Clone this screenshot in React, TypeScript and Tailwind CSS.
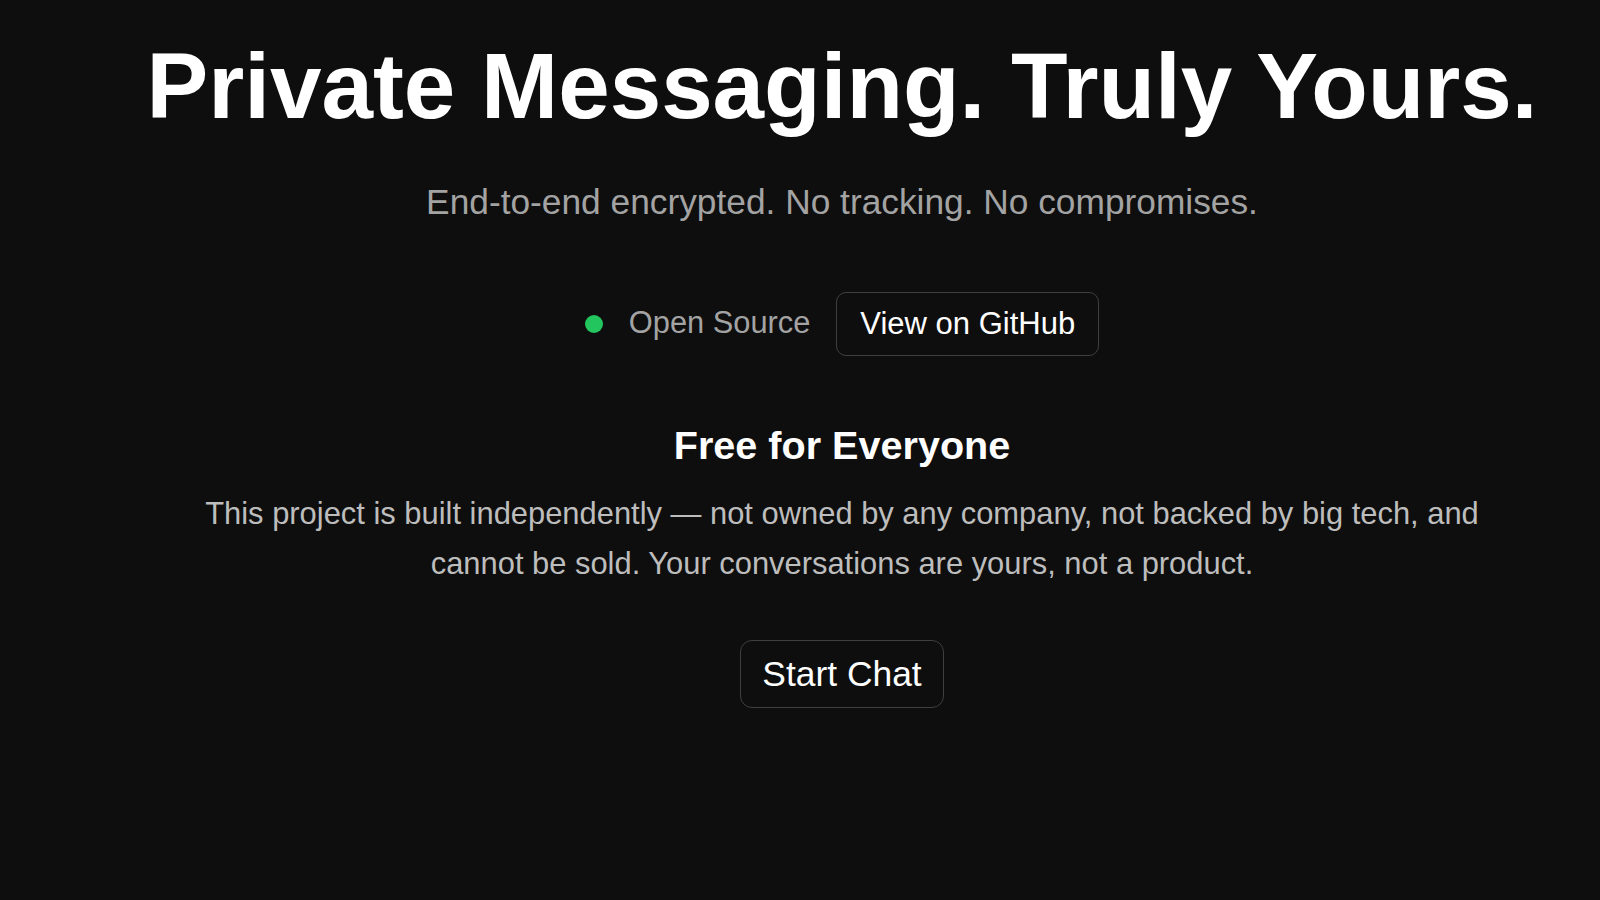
export default function App() {
  return (
    <div className="min-h-[900px] w-full bg-[#0e0e0e] pl-[84px] font-['Liberation_Sans',Arial,sans-serif] text-white">
      <div className="flex flex-col items-center pt-[40px] text-center">
        <h1 className="text-[92.6px] font-bold leading-none whitespace-nowrap">
          Private Messaging. Truly Yours.
        </h1>

        <p className="mt-[51px] text-[35.3px] leading-none text-[#a3a3a3]">
          End-to-end encrypted. No tracking. No compromises.
        </p>

        <div className="mt-[73px] flex items-center gap-[26px]">
          <span className="h-[18px] w-[18px] rounded-full bg-[#22c55e]" />
          <span className="text-[30.8px] leading-none text-[#a3a3a3]">Open Source</span>
          <button className="flex h-[64px] items-center rounded-[10px] border border-[#3f3f3f] px-[23px] text-[31px] leading-none text-white">
            View on GitHub
          </button>
        </div>

        <h2 className="mt-[70px] text-[39.6px] font-bold leading-none">Free for Everyone</h2>

        <p className="mt-[24px] max-w-[1320px] text-[30.9px] leading-[49.4px] text-[#bdbdbd]">
          This project is built independently — not owned by any company, not backed by big tech, and
          cannot be sold. Your conversations are yours, not a product.
        </p>

        <button className="mt-[52px] flex h-[68px] items-center rounded-[12px] border border-[#3f3f3f] px-[21px] text-[35.4px] leading-none text-white">
          Start Chat
        </button>
      </div>
    </div>
  );
}
